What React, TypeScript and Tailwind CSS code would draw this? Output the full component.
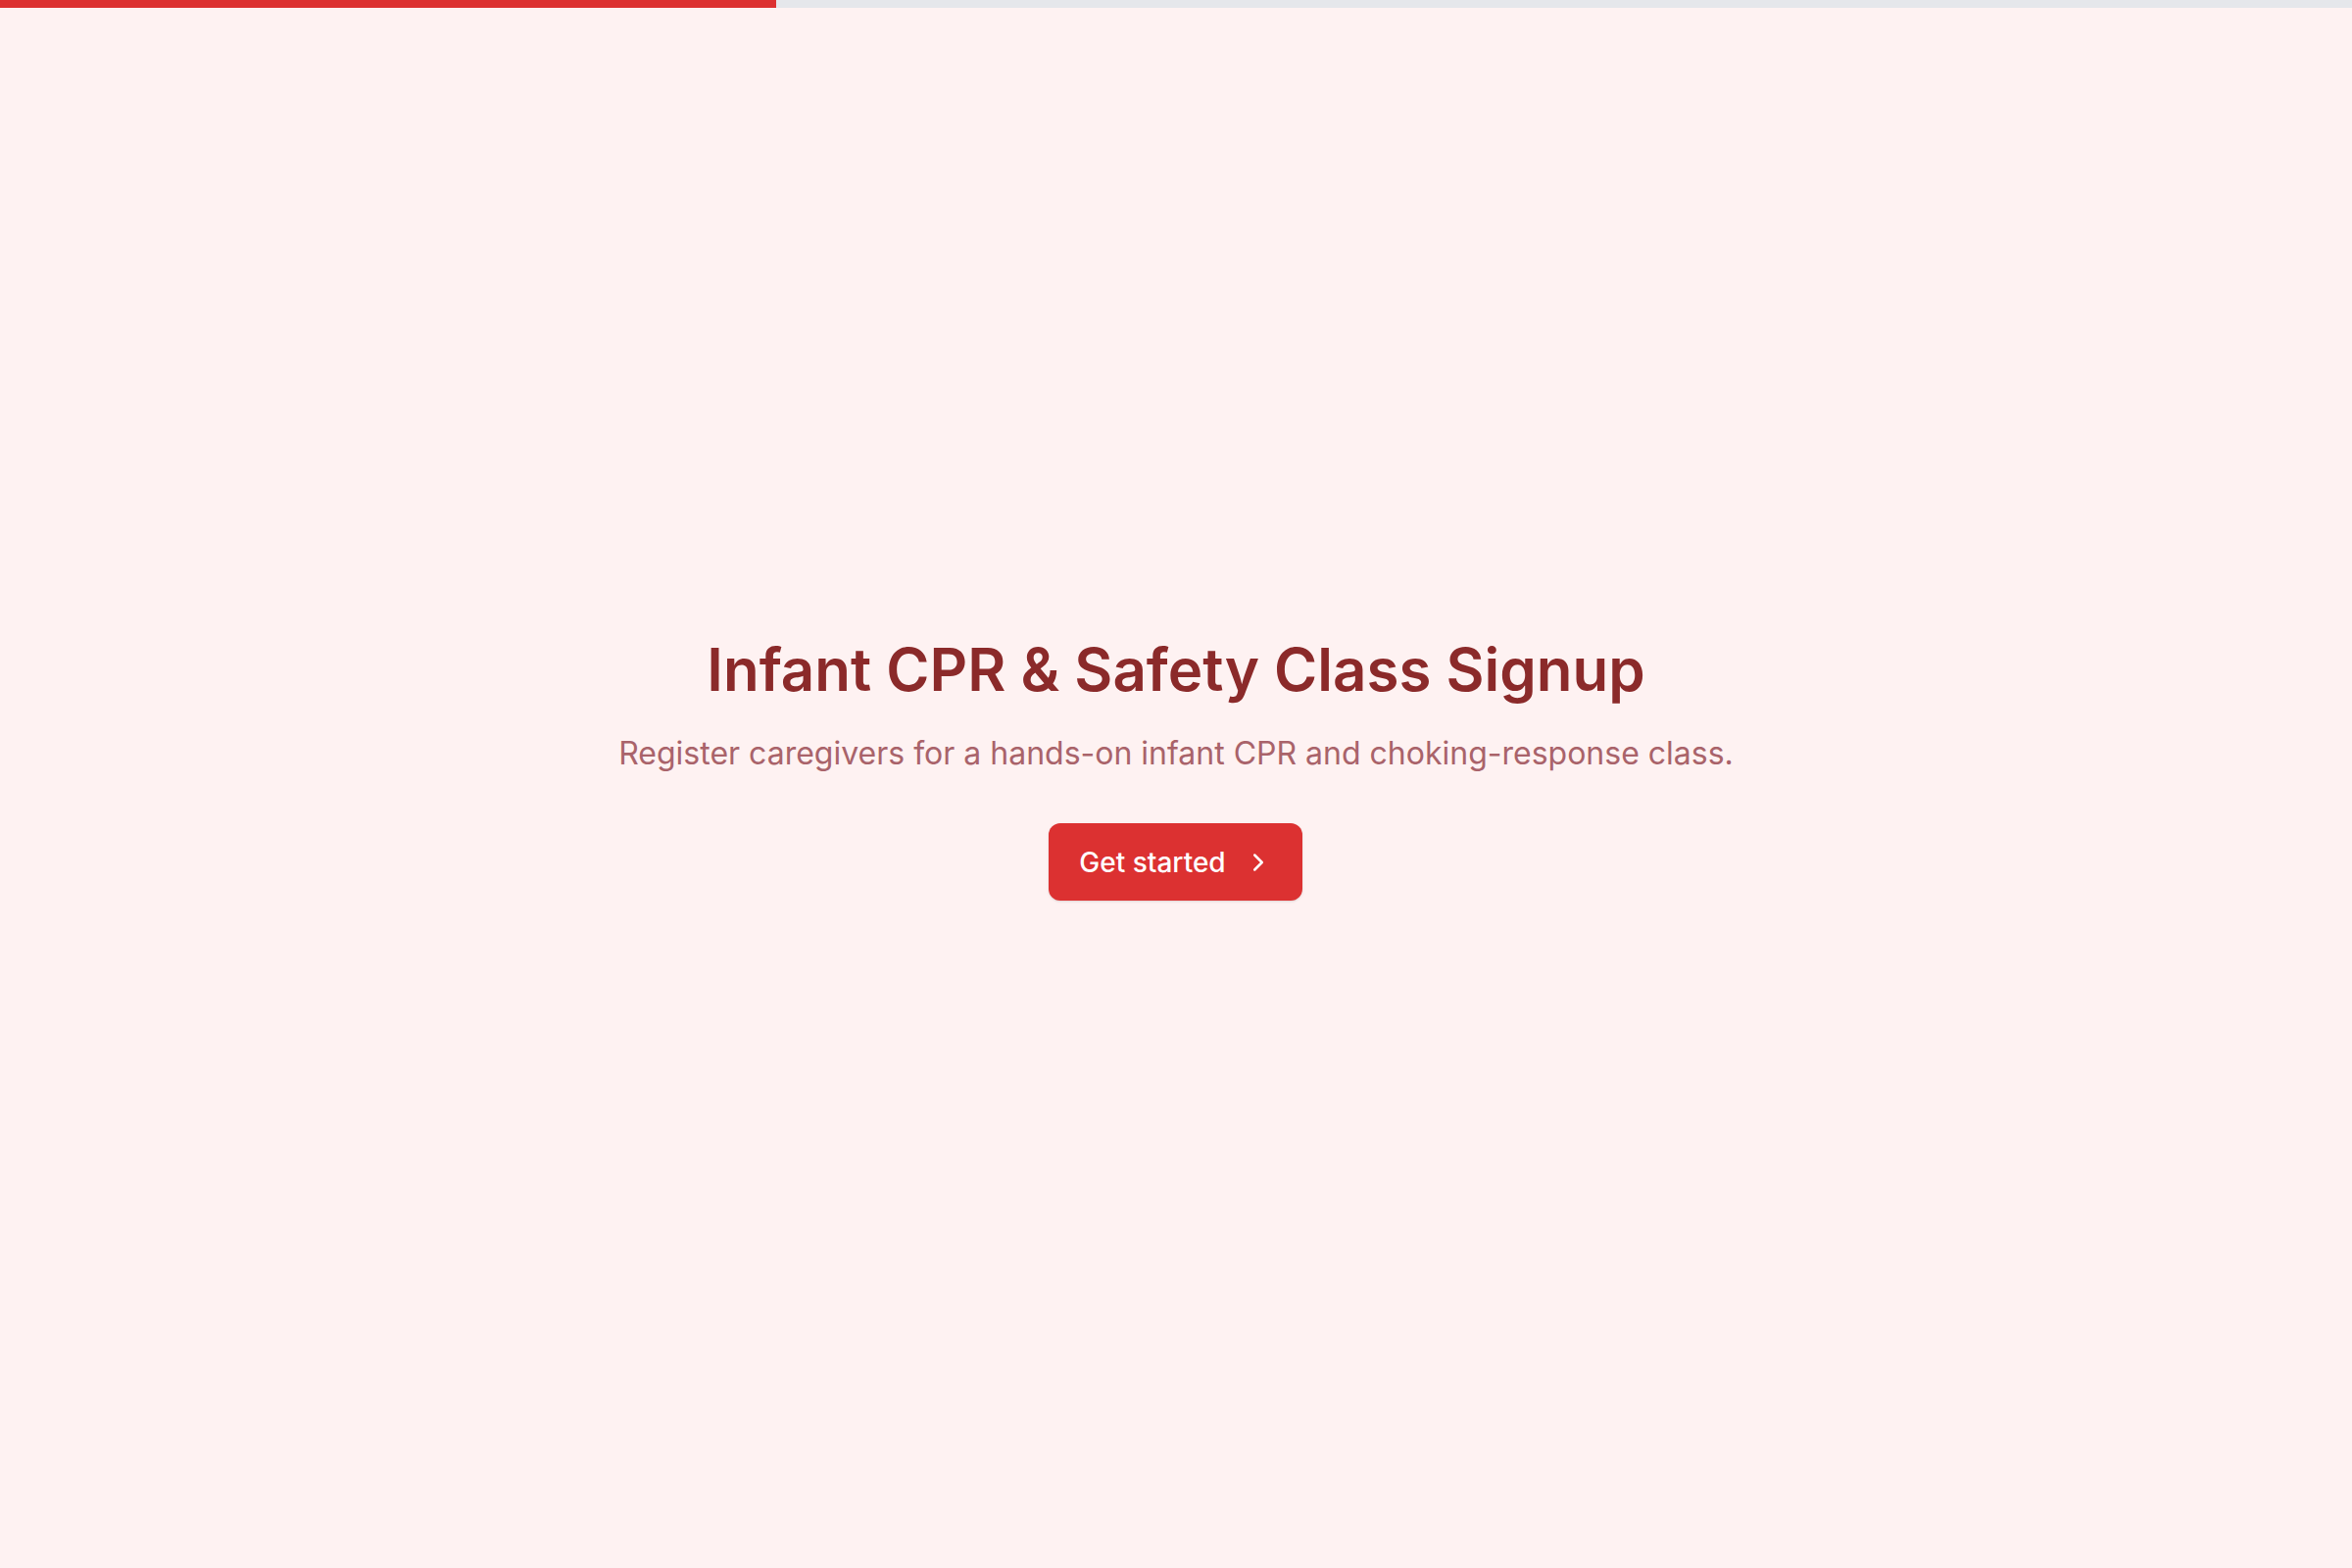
import React from "react";

export default function App() {
  return (
    <div
      className="min-h-screen flex flex-col bg-[#fef2f2]"
      style={{ fontFamily: "Inter, 'Noto Sans', sans-serif" }}
    >
      <div className="h-2 w-full bg-[#e5e7eb]">
        <div className="h-full w-[33%] bg-[#dc3131]" />
      </div>
      <div className="flex-1 flex items-center justify-center pb-[36px]">
        <div className="flex flex-col items-center text-center">
          <h1 className="text-[60px] leading-none font-semibold text-[#8b2a2a]">
            Infant CPR &amp; Safety Class Signup
          </h1>
          <p className="mt-[37px] text-[32px] leading-[38px] text-[#a9636a]">
            Register caregivers for a hands-on infant CPR and choking-response class.
          </p>
          <button className="mt-[52px] h-[79px] w-[259px] flex items-center justify-center gap-[18px] rounded-[12px] bg-[#dc3131] text-white text-[28px] font-medium shadow-sm">
            <span>Get started</span>
            <svg
              width="30"
              height="30"
              viewBox="0 0 24 24"
              fill="none"
              stroke="currentColor"
              strokeWidth="2"
              strokeLinecap="round"
              strokeLinejoin="round"
            >
              <path d="m9 18 6-6-6-6" />
            </svg>
          </button>
        </div>
      </div>
    </div>
  );
}
